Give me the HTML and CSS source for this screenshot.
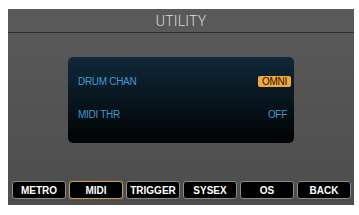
FILE: index.html
```html
<!DOCTYPE html>
<html>
<head>
<meta charset="utf-8">
<link rel="stylesheet" href="styles.css">
</head>
<body>
<div class="screen">
  <div class="title">UTILITY</div>
  <div class="content">
    <div class="panel">
      <div class="row"><span class="label">DRUM CHAN</span><span class="value selected">OMNI</span></div>
      <div class="row"><span class="label">MIDI THR</span><span class="value">OFF</span></div>
    </div>
  </div>
  <div class="tabs">
    <div class="tab">METRO</div>
    <div class="tab active">MIDI</div>
    <div class="tab">TRIGGER</div>
    <div class="tab">SYSEX</div>
    <div class="tab">OS</div>
    <div class="tab">BACK</div>
  </div>
</div>
</body>
</html>
```
FILE: styles.css
```css
html, body { margin: 0; padding: 0; background: #fff; }
body { padding: 9px 5px 10px 8px; }
.screen {
  width: 346px;
  height: 196px;
  background: linear-gradient(#5a5a5a, #4d4d4d);
  display: flex;
  flex-direction: column;
  font-family: "Liberation Sans", Arial, sans-serif;
}
.title {
  height: 23px;
  line-height: 24px;
  text-align: center;
  color: #dcdcdc;
  font-family: Roboto, sans-serif;
  font-weight: 300;
  font-size: 14px;
  letter-spacing: 0.2px;
  border-bottom: 1px solid #2e2e2e;
  background: #595959;
}
.content {
  flex: 1;
  padding-top: 24px;
  display: flex;
  justify-content: center;
  align-items: flex-start;
}
.panel {
  width: 226px;
  height: 86px;
  box-sizing: border-box;
  border-radius: 5px;
  background: linear-gradient(#10293a, #020507 92%);
  padding: 16px 3px 0 10px;
  display: flex;
  flex-direction: column;
  gap: 17px;
}
.row {
  height: 16px;
  display: flex;
  align-items: center;
  justify-content: space-between;
}
.label, .value {
  color: #3c9bd2;
  font-family: "Liberation Sans", Arial, sans-serif;
  font-size: 10px;
  letter-spacing: -0.3px;
}
.value {
  padding: 0 4px;
  height: 11px;
  line-height: 11px;
}
.value.selected {
  background: #f2a93a;
  color: #1a1206;
  border-radius: 2px;
  line-height: 12px;
}
.tabs {
  display: flex;
  gap: 3px;
  padding: 0 3px 6px 4px;
}
.tab {
  flex: 1;
  height: 18px;
  box-sizing: border-box;
  background: #000;
  border: 1px solid #8a8a8a;
  border-radius: 3px;
  color: #fff;
  font-weight: bold;
  font-size: 10px;
  display: flex;
  align-items: center;
  justify-content: center;
}
.tab.active {
  border-color: #c99a45;
  box-shadow: 0 0 1px #c99a45;
}
```
